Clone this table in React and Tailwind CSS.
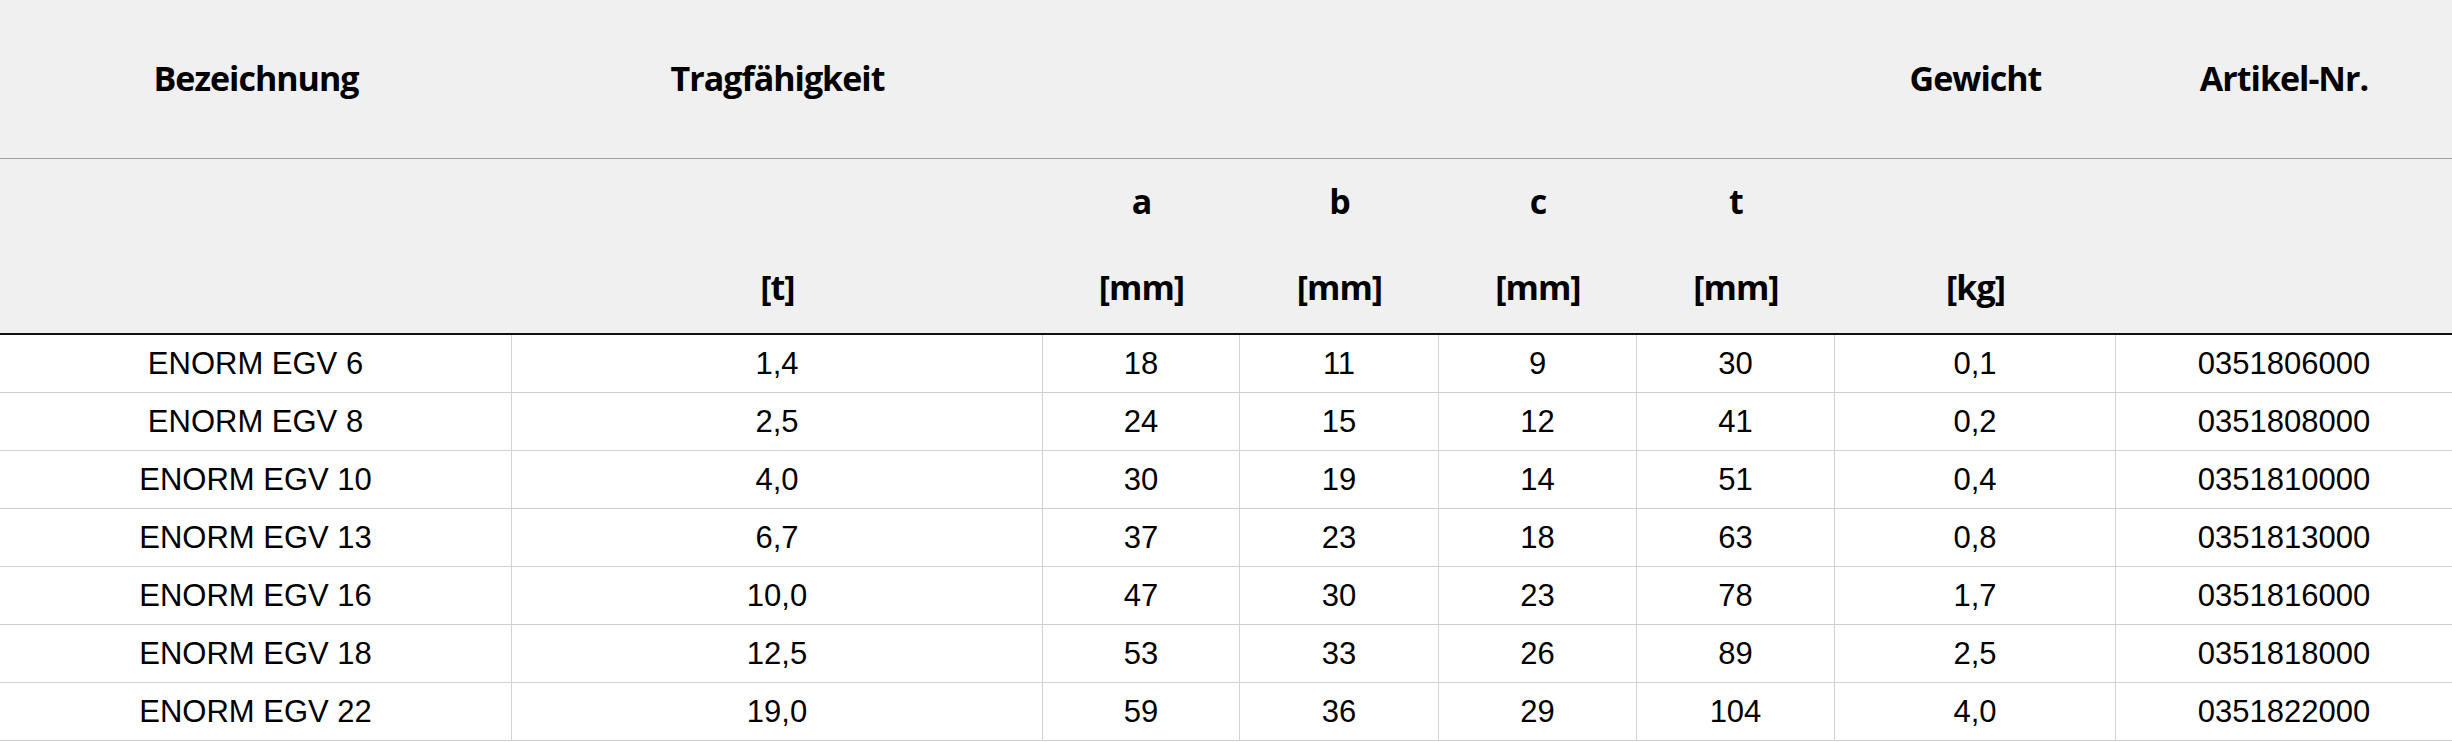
const COLS = "grid grid-cols-[512px_531px_197px_199px_198px_198px_281px_336px]";

const rows = [
  ["ENORM EGV 6", "1,4", "18", "11", "9", "30", "0,1", "0351806000"],
  ["ENORM EGV 8", "2,5", "24", "15", "12", "41", "0,2", "0351808000"],
  ["ENORM EGV 10", "4,0", "30", "19", "14", "51", "0,4", "0351810000"],
  ["ENORM EGV 13", "6,7", "37", "23", "18", "63", "0,8", "0351813000"],
  ["ENORM EGV 16", "10,0", "47", "30", "23", "78", "1,7", "0351816000"],
  ["ENORM EGV 18", "12,5", "53", "33", "26", "89", "2,5", "0351818000"],
  ["ENORM EGV 22", "19,0", "59", "36", "29", "104", "4,0", "0351822000"],
];

// second header row: [top line, unit line]
const units = [
  ["", ""],
  ["", "[t]"],
  ["a", "[mm]"],
  ["b", "[mm]"],
  ["c", "[mm]"],
  ["t", "[mm]"],
  ["", "[kg]"],
  ["", ""],
];

const titles = ["Bezeichnung", "Tragfähigkeit", "", "", "", "", "Gewicht", "Artikel-Nr."];

export default function App() {
  return (
    <div className="w-[2452px] bg-white text-black">
      <div className="bg-[#f0f0f0] font-['Open_Sans',sans-serif] text-[34px] font-bold tracking-[-1px]">
        <div className={`${COLS} h-[159px] border-b border-[#a0a0a0]`}>
          {titles.map((t, i) => (
            <div key={i} className="flex items-center justify-center pb-[2px]">
              {t}
            </div>
          ))}
        </div>
        <div className={`${COLS} h-[176px] border-b-2 border-[#111]`}>
          {units.map(([top, unit], i) => (
            <div key={i} className="flex flex-col items-center">
              <div className="h-[85px] leading-[85px]">{top}</div>
              <div className="h-[86px] leading-[86px]">{unit}</div>
            </div>
          ))}
        </div>
      </div>

      <div className="font-['Liberation_Sans',Arial,sans-serif] text-[31px]">
        {rows.map((row, r) => (
          <div key={r} className={`${COLS} h-[58px] border-b border-[#d0d0d0]`}>
            {row.map((cell, i) => (
              <div
                key={i}
                className={
                  "flex items-center justify-center pt-[2px] " +
                  (i < row.length - 1 ? "border-r border-[#d4d4d4]" : "")
                }
              >
                {cell}
              </div>
            ))}
          </div>
        ))}
      </div>
    </div>
  );
}
